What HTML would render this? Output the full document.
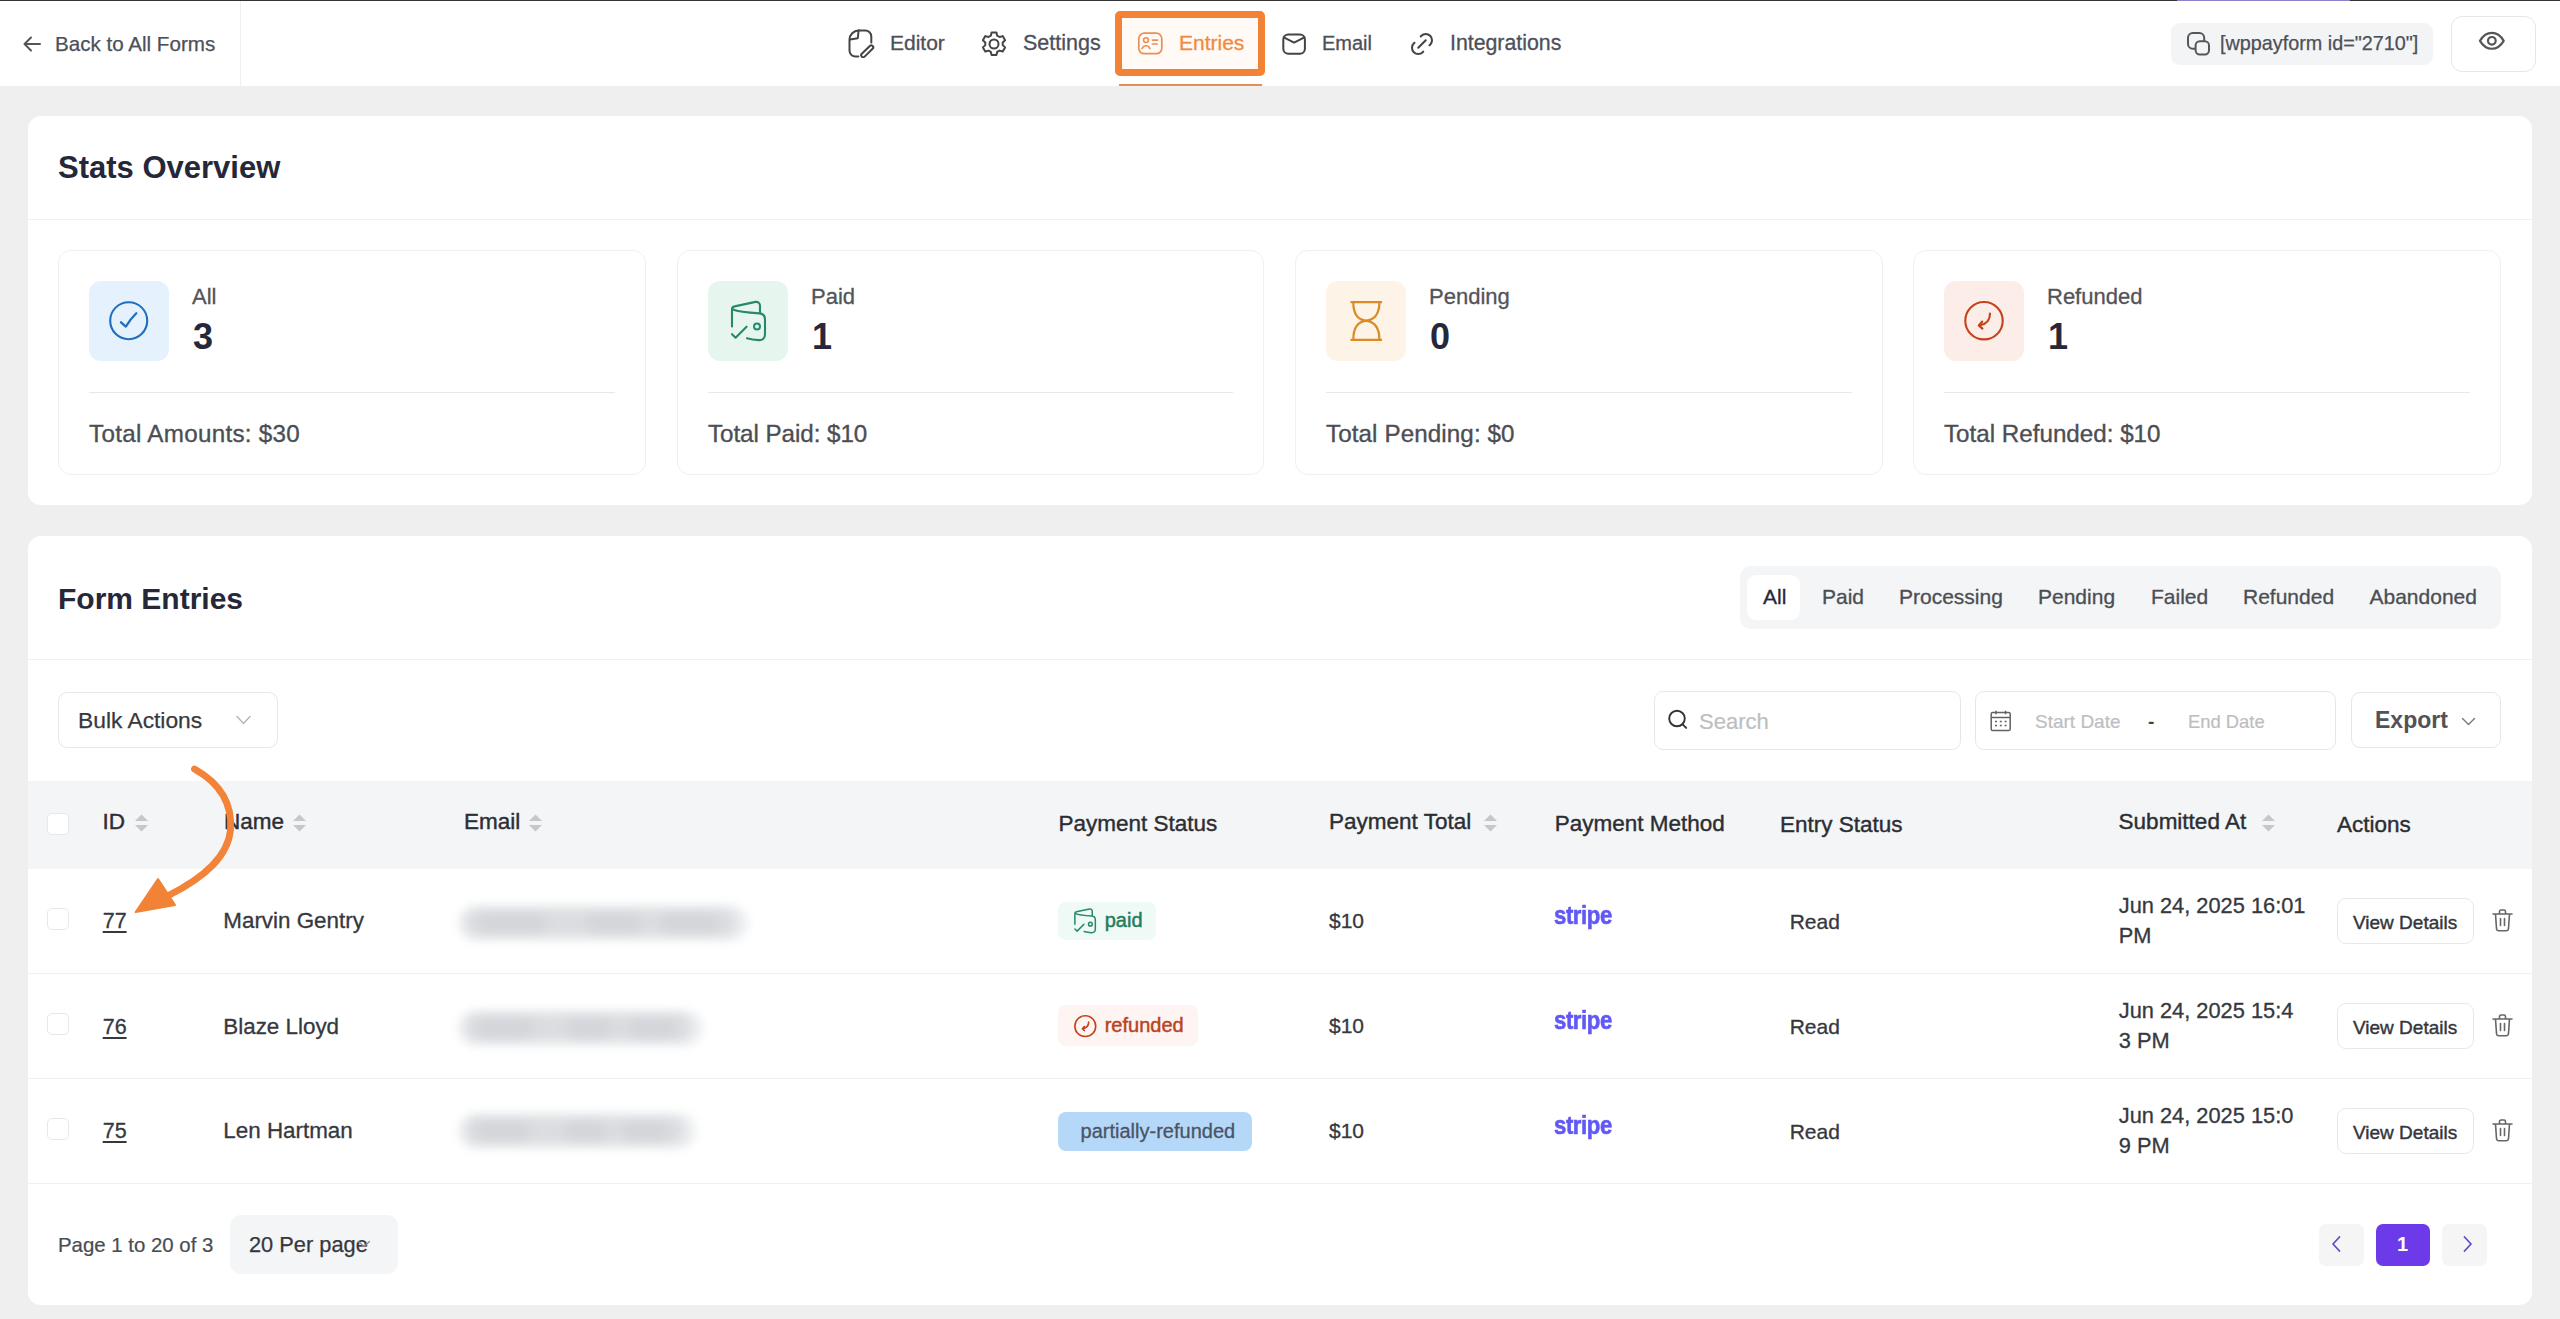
<!DOCTYPE html>
<html><head><meta charset="utf-8"><style>
html,body{margin:0;padding:0;}
body{width:2560px;height:1319px;position:relative;overflow:hidden;background:#efefef;font-family:"Liberation Sans",sans-serif;}
body>div,body>span,body>svg{position:absolute;}
.t{line-height:1;white-space:nowrap;}
</style></head><body>
<div style="left:0px;top:0px;width:2560px;height:86px;background:#fff"></div>
<div style="left:0px;top:0px;width:2560px;height:1px;background:#333"></div>
<div style="left:2177px;top:0px;width:173px;height:1px;background:#8b80c9"></div>
<div style="left:240px;top:1px;width:1px;height:85px;background:#efefef"></div>
<svg style="left:22px;top:34px;" width="20" height="20" viewBox="0 0 20 20" fill="none"><path d="M18 10H3M9 3.5L2.5 10 9 16.5" stroke="#555" stroke-width="2" stroke-linecap="round" stroke-linejoin="round"/></svg>
<span class="t" style="left:55.0px;top:34px;font-size:20.6px;color:#4d5058;font-weight:400;-webkit-text-stroke:0.25px #4d5058">Back to All Forms</span>
<svg style="left:846px;top:28px;" width="30" height="30" viewBox="0 0 30 30" fill="none"><path d="M12.6 2.5H19.3a6 6 0 0 1 6 6V14.5" stroke="#444" stroke-width="2" stroke-linecap="round"/><path d="M12.6 2.5C7.5 2.6 3.6 6.5 3.5 11.6V22.6a6 6 0 0 0 6 6H12.3" stroke="#444" stroke-width="2" stroke-linecap="round"/><path d="M12.6 2.5L11.8 10.2 4 11.4" stroke="#444" stroke-width="2" stroke-linecap="round" stroke-linejoin="round"/><path d="M17.2 27.2L25.2 19.4" stroke="#444" stroke-width="6" stroke-linecap="round"/><path d="M17.2 27.2L25.2 19.4" stroke="#fff" stroke-width="2" stroke-linecap="round"/></svg>
<span class="t" style="left:890.0px;top:32px;font-size:21px;color:#4d5058;font-weight:400;-webkit-text-stroke:0.3px #4d5058">Editor</span>
<svg style="left:979px;top:29px;" width="30" height="30" viewBox="0 0 30 30" fill="none"><circle cx="15" cy="15" r="4.5" stroke="#444" stroke-width="2"/><path d="M12.6 3.5h4.8l.8 3.2 2.3 1.3 3.2-.9 2.4 4.1-2.4 2.3v2.6l2.4 2.3-2.4 4.1-3.2-.9-2.3 1.3-.8 3.2h-4.8l-.8-3.2-2.3-1.3-3.2.9-2.4-4.1 2.4-2.3v-2.6L3.9 11.2l2.4-4.1 3.2.9 2.3-1.3z" stroke="#444" stroke-width="2" stroke-linejoin="round"/></svg>
<span class="t" style="left:1023.0px;top:33px;font-size:21.5px;color:#4d5058;font-weight:400;-webkit-text-stroke:0.3px #4d5058">Settings</span>
<div style="left:1115px;top:11px;width:150px;height:65px;border:7px solid #f28236;border-radius:5px;box-sizing:border-box;background:#fffaf6"></div>
<div style="left:1119px;top:84px;width:143px;height:2px;background:#e38e58"></div>
<svg style="left:1136px;top:31px;" width="28" height="26" viewBox="0 0 28 26" fill="none"><rect x="2.8" y="2.2" width="23" height="20.5" rx="5.5" stroke="#eb8f55" stroke-width="1.7"/><circle cx="10" cy="9.1" r="2.4" stroke="#eb8f55" stroke-width="1.6"/><path d="M6 17.6c1-1.9 2.4-2.9 4-2.9s3 1 4 2.9M16.3 9.1h5.4M16.3 13h4.9" stroke="#eb8f55" stroke-width="1.6" stroke-linecap="round"/></svg>
<span class="t" style="left:1179.0px;top:32px;font-size:21px;color:#f08a40;font-weight:400;-webkit-text-stroke:0.3px #f08a40">Entries</span>
<svg style="left:1280px;top:31px;" width="28" height="26" viewBox="0 0 28 26" fill="none"><rect x="3.3" y="3.4" width="21.6" height="19.4" rx="5" stroke="#444" stroke-width="2"/><path d="M3.8 6.3l10.3 5.3 10.3-5.3" stroke="#444" stroke-width="2" stroke-linecap="round" stroke-linejoin="round"/></svg>
<span class="t" style="left:1322.0px;top:33px;font-size:20px;color:#4d5058;font-weight:400;-webkit-text-stroke:0.3px #4d5058">Email</span>
<svg style="left:1407px;top:28.5px;" width="30" height="30" viewBox="0 0 24 24" fill="none"><path d="M9 15l6-6M11 6l.463-.536a5 5 0 0 1 7.071 7.072l-.534.464M13 18l-.397.534a5.068 5.068 0 0 1-7.127 0 4.972 4.972 0 0 1 0-7.071l.524-.463" stroke="#444" stroke-width="1.65" stroke-linecap="round" stroke-linejoin="round"/></svg>
<span class="t" style="left:1450.0px;top:33px;font-size:21.3px;color:#4d5058;font-weight:400;-webkit-text-stroke:0.3px #4d5058">Integrations</span>
<div style="left:2171px;top:23px;width:262px;height:42px;background:#f3f4f6;border-radius:9px"></div>
<svg style="left:2185px;top:30px;" width="28" height="28" viewBox="0 0 28 28" fill="none"><rect x="3" y="3" width="16.2" height="15.8" rx="4.8" stroke="#55575c" stroke-width="2"/><rect x="10.6" y="11.2" width="13.4" height="13.2" rx="4.2" fill="#f3f4f6" stroke="#55575c" stroke-width="2"/></svg>
<span class="t" style="left:2220.0px;top:34px;font-size:19.8px;color:#4d5056;font-weight:400;-webkit-text-stroke:0.25px #4d5056">[wppayform id="2710"]</span>
<div style="left:2451px;top:16px;width:85px;height:56px;border:1px solid #e6e7e9;border-radius:11px;box-sizing:border-box;background:#fff"></div>
<svg style="left:2476.3px;top:25.4px;" width="31.7" height="31.7" viewBox="0 0 24 24" fill="none"><circle cx="12" cy="12" r="2.9" stroke="#555" stroke-width="1.65"/><path d="M21 12c-2.4 4-5.4 6-9 6-3.6 0-6.6-2-9-6 2.4-4 5.4-6 9-6 3.6 0 6.6 2 9 6" stroke="#555" stroke-width="1.65" stroke-linecap="round" stroke-linejoin="round"/></svg>
<div style="left:28px;top:116px;width:2504px;height:389px;background:#fff;border-radius:13px"></div>
<span class="t" style="left:58.0px;top:152px;font-size:31px;color:#262839;font-weight:700;">Stats Overview</span>
<div style="left:28px;top:219px;width:2504px;height:1px;background:#f1f1f3"></div>
<div style="left:58px;top:250px;width:588px;height:225px;border:1px solid #f0f0f2;border-radius:13px;box-sizing:border-box"></div>
<div style="left:89px;top:281px;width:80px;height:80px;background:#e5f2fd;border-radius:12px"></div>
<svg style="left:89px;top:281px;" width="80" height="80" viewBox="0 0 80 80" fill="none"><circle cx="39.7" cy="39.7" r="18.5" stroke="#1f6fbf" stroke-width="2.1"/><path d="M32 41.3l4.8 4.3c3-5 6.5-9.5 10.5-13.4" stroke="#1f6fbf" stroke-width="2.3" stroke-linecap="round" stroke-linejoin="round"/></svg>
<span class="t" style="left:192.0px;top:286px;font-size:22px;color:#525459;font-weight:400;-webkit-text-stroke:0.3px #525459">All</span>
<span class="t" style="left:193.0px;top:319px;font-size:36px;color:#262839;font-weight:700;">3</span>
<div style="left:89px;top:392px;width:526px;height:1px;background:#e6e8eb"></div>
<span class="t" style="left:89.0px;top:422px;font-size:24.2px;color:#4c4e53;font-weight:400;-webkit-text-stroke:0.35px #4c4e53;letter-spacing:0.3px">Total Amounts: $30</span>
<div style="left:677px;top:250px;width:587px;height:225px;border:1px solid #f0f0f2;border-radius:13px;box-sizing:border-box"></div>
<div style="left:708px;top:281px;width:80px;height:80px;background:#e6f6ef;border-radius:12px"></div>
<svg style="left:708px;top:281px;" width="80" height="80" viewBox="0 0 80 80" fill="none"><path d="M24 45.5V28.5c0-1.6 1-2.8 2.6-3.1L47.5 20.9c2.6-.4 4.5 1.3 4.5 3.9V31.5" stroke="#25896a" stroke-width="2.1" stroke-linecap="round"/><path d="M25 28.5C30 30.6 40 31.6 51.5 32.4c3.3.3 5.5 2.6 5.5 6.1V53.5c0 3.4-2.4 5.8-6 5.6-4-.2-8.5-.8-12-1.8" stroke="#25896a" stroke-width="2.1" stroke-linecap="round"/><circle cx="49" cy="45.5" r="3" stroke="#25896a" stroke-width="2"/><path d="M24 53.2l3.6 3.5 11-11" stroke="#25896a" stroke-width="2.1" stroke-linecap="round" stroke-linejoin="round"/></svg>
<span class="t" style="left:811.0px;top:286px;font-size:22px;color:#525459;font-weight:400;-webkit-text-stroke:0.3px #525459">Paid</span>
<span class="t" style="left:812.0px;top:319px;font-size:36px;color:#262839;font-weight:700;">1</span>
<div style="left:708px;top:392px;width:525px;height:1px;background:#e6e8eb"></div>
<span class="t" style="left:708.0px;top:422px;font-size:24.2px;color:#4c4e53;font-weight:400;-webkit-text-stroke:0.35px #4c4e53;letter-spacing:-0.05px">Total Paid: $10</span>
<div style="left:1295px;top:250px;width:588px;height:225px;border:1px solid #f0f0f2;border-radius:13px;box-sizing:border-box"></div>
<div style="left:1326px;top:281px;width:80px;height:80px;background:#fef3e7;border-radius:12px"></div>
<svg style="left:1326px;top:281px;" width="80" height="80" viewBox="0 0 80 80" fill="none"><path d="M24.5 21.2H56M24.5 58.8H56" stroke="#dc8a24" stroke-width="2.3"/><path d="M27.3 21.2c0 10 3 17.5 12.7 18.5 9.7-1 13.4-8.5 13.4-18.5M27.3 58.8c0-10 3-17.8 12.7-19.1 9.7 1.3 13.4 9.1 13.4 19.1" stroke="#dc8a24" stroke-width="2.2"/></svg>
<span class="t" style="left:1429.0px;top:286px;font-size:22px;color:#525459;font-weight:400;-webkit-text-stroke:0.3px #525459">Pending</span>
<span class="t" style="left:1430.0px;top:319px;font-size:36px;color:#262839;font-weight:700;">0</span>
<div style="left:1326px;top:392px;width:526px;height:1px;background:#e6e8eb"></div>
<span class="t" style="left:1326.0px;top:422px;font-size:24.2px;color:#4c4e53;font-weight:400;-webkit-text-stroke:0.35px #4c4e53;letter-spacing:0.1px">Total Pending: $0</span>
<div style="left:1913px;top:250px;width:588px;height:225px;border:1px solid #f0f0f2;border-radius:13px;box-sizing:border-box"></div>
<div style="left:1944px;top:281px;width:80px;height:80px;background:#fdede8;border-radius:12px"></div>
<svg style="left:1944px;top:281px;" width="80" height="80" viewBox="0 0 80 80" fill="none"><circle cx="40" cy="39.7" r="18.7" stroke="#c4421e" stroke-width="2.1"/><path d="M46 32.5c0 6-3.5 10.5-10 11.8" stroke="#c4421e" stroke-width="2.1" stroke-linecap="round"/><path d="M38.2 40.6l-3.4 3.8 3.6 3.2" stroke="#c4421e" stroke-width="2.2" stroke-linecap="round" stroke-linejoin="round"/></svg>
<span class="t" style="left:2047.0px;top:286px;font-size:22px;color:#525459;font-weight:400;-webkit-text-stroke:0.3px #525459">Refunded</span>
<span class="t" style="left:2048.0px;top:319px;font-size:36px;color:#262839;font-weight:700;">1</span>
<div style="left:1944px;top:392px;width:526px;height:1px;background:#e6e8eb"></div>
<span class="t" style="left:1944.0px;top:422px;font-size:24.2px;color:#4c4e53;font-weight:400;-webkit-text-stroke:0.35px #4c4e53;letter-spacing:0.0px">Total Refunded: $10</span>
<div style="left:28px;top:536px;width:2504px;height:769px;background:#fff;border-radius:13px"></div>
<span class="t" style="left:58.0px;top:584px;font-size:30px;color:#262839;font-weight:700;">Form Entries</span>
<div style="left:1740px;top:566px;width:761px;height:63px;background:#f3f5f7;border-radius:11px"></div>
<div style="left:1747px;top:575px;width:53px;height:45px;background:#fff;border-radius:9px"></div>
<span class="t" style="left:1763.0px;top:586px;font-size:21px;color:#262839;font-weight:400;-webkit-text-stroke:0.3px #262839">All</span>
<span class="t" style="left:1822.0px;top:586px;font-size:21px;color:#4c4e53;font-weight:400;-webkit-text-stroke:0.3px #4c4e53">Paid</span>
<span class="t" style="left:1899.0px;top:586px;font-size:21px;color:#4c4e53;font-weight:400;-webkit-text-stroke:0.3px #4c4e53">Processing</span>
<span class="t" style="left:2038.0px;top:586px;font-size:21px;color:#4c4e53;font-weight:400;-webkit-text-stroke:0.3px #4c4e53">Pending</span>
<span class="t" style="left:2151.0px;top:586px;font-size:21px;color:#4c4e53;font-weight:400;-webkit-text-stroke:0.3px #4c4e53">Failed</span>
<span class="t" style="left:2243.0px;top:586px;font-size:21px;color:#4c4e53;font-weight:400;-webkit-text-stroke:0.3px #4c4e53">Refunded</span>
<span class="t" style="left:2369.5px;top:586px;font-size:21px;color:#4c4e53;font-weight:400;-webkit-text-stroke:0.3px #4c4e53">Abandoned</span>
<div style="left:28px;top:659px;width:2504px;height:1px;background:#f0f1f3"></div>
<div style="left:58px;top:692px;width:220px;height:56px;border:1px solid #e6e7e9;border-radius:9px;box-sizing:border-box"></div>
<span class="t" style="left:78.0px;top:709px;font-size:22.8px;color:#38393d;font-weight:400;-webkit-text-stroke:0.25px #38393d">Bulk Actions</span>
<svg style="left:235px;top:714px;" width="17" height="12" viewBox="0 0 17 12" fill="none"><path d="M2 2.5l6.5 7 6.5-7" stroke="#b3b5b8" stroke-width="1.4" stroke-linecap="round" stroke-linejoin="round"/></svg>
<div style="left:1654px;top:691px;width:307px;height:59px;border:1px solid #e6e7e9;border-radius:9px;box-sizing:border-box"></div>
<svg style="left:1665px;top:706px;" width="26" height="26" viewBox="0 0 26 26" fill="none"><circle cx="12" cy="12.5" r="7.8" stroke="#333" stroke-width="1.9"/><path d="M17.6 18.3l3.6 3.6" stroke="#333" stroke-width="1.9" stroke-linecap="round"/></svg>
<span class="t" style="left:1699.0px;top:711px;font-size:22px;color:#bcbec2;font-weight:400;-webkit-text-stroke:0.2px #bcbec2">Search</span>
<div style="left:1975px;top:691px;width:361px;height:59px;border:1px solid #e6e7e9;border-radius:9px;box-sizing:border-box"></div>
<svg style="left:1989px;top:709px;" width="24" height="23" viewBox="0 0 24 23" fill="none"><rect x="2.2" y="3.5" width="19" height="18" rx="1.6" stroke="#606266" stroke-width="1.5"/><path d="M2.2 8.5h19M7 1.8v3.4M16.5 1.8v3.4" stroke="#606266" stroke-width="1.5"/><path d="M6 12.5h2M10.8 12.5h2M15.6 12.5h2M6 16.5h2M10.8 16.5h2M15.6 16.5h2" stroke="#606266" stroke-width="1.5"/></svg>
<span class="t" style="left:2035.0px;top:712px;font-size:19px;color:#bcbec2;font-weight:400;-webkit-text-stroke:0.2px #bcbec2">Start Date</span>
<span class="t" style="left:2148.0px;top:712px;font-size:19px;color:#444;font-weight:700;">-</span>
<span class="t" style="left:2188.0px;top:713px;font-size:18.4px;color:#bcbec2;font-weight:400;-webkit-text-stroke:0.2px #bcbec2">End Date</span>
<div style="left:2351px;top:692px;width:150px;height:56px;border:1px solid #e6e7e9;border-radius:9px;box-sizing:border-box"></div>
<span class="t" style="left:2375.0px;top:709px;font-size:23px;color:#505358;font-weight:700;">Export</span>
<svg style="left:2460px;top:715px;" width="18" height="13" viewBox="0 0 18 13" fill="none"><path d="M2.5 3.5l6 6 6-6" stroke="#777" stroke-width="1.4" stroke-linecap="round" stroke-linejoin="round"/></svg>
<div style="left:28px;top:781px;width:2504px;height:88px;background:#f3f5f7"></div>
<div style="left:47px;top:813px;width:22px;height:22px;background:#fff;border:1px solid #e6e8eb;border-radius:5px;box-sizing:border-box"></div>
<span class="t" style="left:102.5px;top:811px;font-size:22.5px;color:#2c2e33;font-weight:400;-webkit-text-stroke:0.4px #2c2e33">ID</span>
<svg style="left:134px;top:814px;" width="15" height="18" viewBox="0 0 15 18" fill="none"><path d="M7.5 0.5L14 7H1z" fill="#c4c7cc"/><path d="M7.5 17.5L14 11H1z" fill="#c4c7cc"/></svg>
<span class="t" style="left:224.0px;top:811px;font-size:22.5px;color:#2c2e33;font-weight:400;-webkit-text-stroke:0.4px #2c2e33">Name</span>
<svg style="left:292px;top:814px;" width="15" height="18" viewBox="0 0 15 18" fill="none"><path d="M7.5 0.5L14 7H1z" fill="#c4c7cc"/><path d="M7.5 17.5L14 11H1z" fill="#c4c7cc"/></svg>
<span class="t" style="left:464.0px;top:811px;font-size:22.5px;color:#2c2e33;font-weight:400;-webkit-text-stroke:0.4px #2c2e33">Email</span>
<svg style="left:528px;top:814px;" width="15" height="18" viewBox="0 0 15 18" fill="none"><path d="M7.5 0.5L14 7H1z" fill="#c4c7cc"/><path d="M7.5 17.5L14 11H1z" fill="#c4c7cc"/></svg>
<span class="t" style="left:1058.4px;top:813px;font-size:22.5px;color:#2c2e33;font-weight:400;-webkit-text-stroke:0.4px #2c2e33">Payment Status</span>
<span class="t" style="left:1329.0px;top:811px;font-size:22.5px;color:#2c2e33;font-weight:400;-webkit-text-stroke:0.4px #2c2e33">Payment Total</span>
<svg style="left:1483px;top:814px;" width="15" height="18" viewBox="0 0 15 18" fill="none"><path d="M7.5 0.5L14 7H1z" fill="#c4c7cc"/><path d="M7.5 17.5L14 11H1z" fill="#c4c7cc"/></svg>
<span class="t" style="left:1554.7px;top:813px;font-size:22.5px;color:#2c2e33;font-weight:400;-webkit-text-stroke:0.4px #2c2e33">Payment Method</span>
<span class="t" style="left:1780.0px;top:814px;font-size:22.5px;color:#2c2e33;font-weight:400;-webkit-text-stroke:0.4px #2c2e33">Entry Status</span>
<span class="t" style="left:2118.6px;top:811px;font-size:22.5px;color:#2c2e33;font-weight:400;-webkit-text-stroke:0.4px #2c2e33">Submitted At</span>
<svg style="left:2261px;top:814px;" width="15" height="18" viewBox="0 0 15 18" fill="none"><path d="M7.5 0.5L14 7H1z" fill="#c4c7cc"/><path d="M7.5 17.5L14 11H1z" fill="#c4c7cc"/></svg>
<span class="t" style="left:2337.0px;top:814px;font-size:22.5px;color:#2c2e33;font-weight:400;-webkit-text-stroke:0.4px #2c2e33">Actions</span>
<div style="left:28px;top:973px;width:2504px;height:1px;background:#eef0f2"></div>
<div style="left:47px;top:908px;width:22px;height:22px;background:#fff;border:1px solid #e6e8eb;border-radius:5px;box-sizing:border-box"></div>
<span class="t" style="left:102.7px;top:911px;font-size:21.5px;color:#36383e;font-weight:400;text-decoration:underline;text-underline-offset:3px;-webkit-text-stroke:0.3px #36383e">77</span>
<span class="t" style="left:223.3px;top:910px;font-size:22.4px;color:#36383e;font-weight:400;-webkit-text-stroke:0.3px #36383e">Marvin Gentry</span>
<div style="left:458px;top:905px;width:290px;height:36px;background:#eceef0;border-radius:18px;filter:blur(5px)"></div>
<div style="left:466px;top:910px;width:270px;height:25px;background:#dbdde0;border-radius:12px;filter:blur(5px)"></div>
<div style="left:479px;top:915px;width:67px;height:16px;background:#d3d5d9;border-radius:8px;filter:blur(5px)"></div>
<div style="left:587px;top:915px;width:54px;height:16px;background:#d3d5d9;border-radius:8px;filter:blur(5px)"></div>
<div style="left:660px;top:915px;width:59px;height:16px;background:#d3d5d9;border-radius:8px;filter:blur(5px)"></div>
<div style="left:1058px;top:902px;width:98px;height:38px;background:#eff9f5;border-radius:8px"></div>
<svg style="left:1059.8px;top:896.1px;" width="49.6" height="49.6" viewBox="0 0 80 80" fill="none"><path d="M24 45.5V28.5c0-1.6 1-2.8 2.6-3.1L47.5 20.9c2.6-.4 4.5 1.3 4.5 3.9V31.5" stroke="#25896a" stroke-width="2.4" stroke-linecap="round"/><path d="M25 28.5C30 30.6 40 31.6 51.5 32.4c3.3.3 5.5 2.6 5.5 6.1V53.5c0 3.4-2.4 5.8-6 5.6-4-.2-8.5-.8-12-1.8" stroke="#25896a" stroke-width="2.4" stroke-linecap="round"/><circle cx="49" cy="45.5" r="3" stroke="#25896a" stroke-width="2.4"/><path d="M24 53.2l3.6 3.5 11-11" stroke="#25896a" stroke-width="2.4" stroke-linecap="round" stroke-linejoin="round"/></svg>
<span class="t" style="left:1104.7px;top:910px;font-size:20px;color:#1f7d5b;font-weight:400;-webkit-text-stroke:0.45px #1f7d5b">paid</span>
<span class="t" style="left:1329.0px;top:910px;font-size:21px;color:#36383e;font-weight:400;-webkit-text-stroke:0.3px #36383e">$10</span>
<span class="t" style="left:1554.0px;top:903px;font-size:25.5px;color:#6158f5;font-weight:700;letter-spacing:-0.5px;-webkit-text-stroke:0.6px #6158f5;transform:scaleX(0.87);transform-origin:0 0">stripe</span>
<span class="t" style="left:1789.7px;top:911px;font-size:21px;color:#36383e;font-weight:400;-webkit-text-stroke:0.3px #36383e">Read</span>
<span class="t" style="left:2118.8px;top:895px;font-size:21.8px;color:#36383e;font-weight:400;-webkit-text-stroke:0.3px #36383e">Jun 24, 2025 16:01</span>
<span class="t" style="left:2118.8px;top:925px;font-size:21.8px;color:#36383e;font-weight:400;-webkit-text-stroke:0.3px #36383e">PM</span>
<div style="left:2337px;top:898px;width:137px;height:46px;border:1px solid #e6e8eb;border-radius:9px;box-sizing:border-box"></div>
<span class="t" style="left:2353.0px;top:913px;font-size:19px;color:#34363b;font-weight:400;-webkit-text-stroke:0.4px #34363b">View Details</span>
<svg style="left:2491px;top:908px;" width="23" height="25" viewBox="0 0 23 25" fill="none"><path d="M2 6h19M8.5 6V3.5c0-.8.6-1.5 1.5-1.5h3c.9 0 1.5.7 1.5 1.5V6M4.5 6l1 14.5c.1 1.3 1.1 2.3 2.4 2.3h7.2c1.3 0 2.3-1 2.4-2.3L18.5 6M9.5 10.5v7M13.5 10.5v7" stroke="#666" stroke-width="1.6" stroke-linecap="round"/></svg>
<div style="left:28px;top:1078px;width:2504px;height:1px;background:#eef0f2"></div>
<div style="left:47px;top:1013px;width:22px;height:22px;background:#fff;border:1px solid #e6e8eb;border-radius:5px;box-sizing:border-box"></div>
<span class="t" style="left:102.7px;top:1017px;font-size:21.5px;color:#36383e;font-weight:400;text-decoration:underline;text-underline-offset:3px;-webkit-text-stroke:0.3px #36383e">76</span>
<span class="t" style="left:223.3px;top:1016px;font-size:22.4px;color:#36383e;font-weight:400;-webkit-text-stroke:0.3px #36383e">Blaze Lloyd</span>
<div style="left:458px;top:1010px;width:245px;height:36px;background:#eceef0;border-radius:18px;filter:blur(5px)"></div>
<div style="left:466px;top:1015px;width:225px;height:25px;background:#dbdde0;border-radius:12px;filter:blur(5px)"></div>
<div style="left:477px;top:1020px;width:56px;height:16px;background:#d3d5d9;border-radius:8px;filter:blur(5px)"></div>
<div style="left:567px;top:1020px;width:45px;height:16px;background:#d3d5d9;border-radius:8px;filter:blur(5px)"></div>
<div style="left:628px;top:1020px;width:49px;height:16px;background:#d3d5d9;border-radius:8px;filter:blur(5px)"></div>
<div style="left:1058px;top:1005px;width:139.5px;height:40.59999999999991px;background:#fef5f2;border-radius:8px"></div>
<svg style="left:1062.7px;top:1003.8px;" width="44.6" height="44.6" viewBox="0 0 80 80" fill="none"><circle cx="40" cy="39.7" r="18.7" stroke="#c4421e" stroke-width="2.9"/><path d="M46 32.5c0 6-3.5 10.5-10 11.8" stroke="#c4421e" stroke-width="2.9" stroke-linecap="round"/><path d="M38.2 40.6l-3.4 3.8 3.6 3.2" stroke="#c4421e" stroke-width="2.9" stroke-linecap="round" stroke-linejoin="round"/></svg>
<span class="t" style="left:1104.7px;top:1015px;font-size:20px;color:#bb431d;font-weight:400;-webkit-text-stroke:0.45px #bb431d">refunded</span>
<span class="t" style="left:1329.0px;top:1015px;font-size:21px;color:#36383e;font-weight:400;-webkit-text-stroke:0.3px #36383e">$10</span>
<span class="t" style="left:1554.0px;top:1008px;font-size:25.5px;color:#6158f5;font-weight:700;letter-spacing:-0.5px;-webkit-text-stroke:0.6px #6158f5;transform:scaleX(0.87);transform-origin:0 0">stripe</span>
<span class="t" style="left:1789.7px;top:1016px;font-size:21px;color:#36383e;font-weight:400;-webkit-text-stroke:0.3px #36383e">Read</span>
<span class="t" style="left:2118.8px;top:1000px;font-size:21.8px;color:#36383e;font-weight:400;-webkit-text-stroke:0.3px #36383e">Jun 24, 2025 15:4</span>
<span class="t" style="left:2118.8px;top:1030px;font-size:21.8px;color:#36383e;font-weight:400;-webkit-text-stroke:0.3px #36383e">3 PM</span>
<div style="left:2337px;top:1003px;width:137px;height:46px;border:1px solid #e6e8eb;border-radius:9px;box-sizing:border-box"></div>
<span class="t" style="left:2353.0px;top:1018px;font-size:19px;color:#34363b;font-weight:400;-webkit-text-stroke:0.4px #34363b">View Details</span>
<svg style="left:2491px;top:1013px;" width="23" height="25" viewBox="0 0 23 25" fill="none"><path d="M2 6h19M8.5 6V3.5c0-.8.6-1.5 1.5-1.5h3c.9 0 1.5.7 1.5 1.5V6M4.5 6l1 14.5c.1 1.3 1.1 2.3 2.4 2.3h7.2c1.3 0 2.3-1 2.4-2.3L18.5 6M9.5 10.5v7M13.5 10.5v7" stroke="#666" stroke-width="1.6" stroke-linecap="round"/></svg>
<div style="left:28px;top:1183px;width:2504px;height:1px;background:#eef0f2"></div>
<div style="left:47px;top:1118px;width:22px;height:22px;background:#fff;border:1px solid #e6e8eb;border-radius:5px;box-sizing:border-box"></div>
<span class="t" style="left:102.7px;top:1121px;font-size:21.5px;color:#36383e;font-weight:400;text-decoration:underline;text-underline-offset:3px;-webkit-text-stroke:0.3px #36383e">75</span>
<span class="t" style="left:223.3px;top:1120px;font-size:22.4px;color:#36383e;font-weight:400;-webkit-text-stroke:0.3px #36383e">Len Hartman</span>
<div style="left:458px;top:1113px;width:238px;height:36px;background:#eceef0;border-radius:18px;filter:blur(5px)"></div>
<div style="left:466px;top:1118px;width:218px;height:25px;background:#dbdde0;border-radius:12px;filter:blur(5px)"></div>
<div style="left:476px;top:1123px;width:54px;height:16px;background:#d3d5d9;border-radius:8px;filter:blur(5px)"></div>
<div style="left:564px;top:1123px;width:43px;height:16px;background:#d3d5d9;border-radius:8px;filter:blur(5px)"></div>
<div style="left:622px;top:1123px;width:47px;height:16px;background:#d3d5d9;border-radius:8px;filter:blur(5px)"></div>
<div style="left:1058px;top:1112px;width:194px;height:39px;background:#b6d8f8;border-radius:8px"></div>
<span class="t" style="left:1080.6px;top:1121px;font-size:20px;color:#4a5466;font-weight:400;-webkit-text-stroke:0.3px #4a5466">partially-refunded</span>
<span class="t" style="left:1329.0px;top:1120px;font-size:21px;color:#36383e;font-weight:400;-webkit-text-stroke:0.3px #36383e">$10</span>
<span class="t" style="left:1554.0px;top:1113px;font-size:25.5px;color:#6158f5;font-weight:700;letter-spacing:-0.5px;-webkit-text-stroke:0.6px #6158f5;transform:scaleX(0.87);transform-origin:0 0">stripe</span>
<span class="t" style="left:1789.7px;top:1121px;font-size:21px;color:#36383e;font-weight:400;-webkit-text-stroke:0.3px #36383e">Read</span>
<span class="t" style="left:2118.8px;top:1105px;font-size:21.8px;color:#36383e;font-weight:400;-webkit-text-stroke:0.3px #36383e">Jun 24, 2025 15:0</span>
<span class="t" style="left:2118.8px;top:1135px;font-size:21.8px;color:#36383e;font-weight:400;-webkit-text-stroke:0.3px #36383e">9 PM</span>
<div style="left:2337px;top:1108px;width:137px;height:46px;border:1px solid #e6e8eb;border-radius:9px;box-sizing:border-box"></div>
<span class="t" style="left:2353.0px;top:1123px;font-size:19px;color:#34363b;font-weight:400;-webkit-text-stroke:0.4px #34363b">View Details</span>
<svg style="left:2491px;top:1118px;" width="23" height="25" viewBox="0 0 23 25" fill="none"><path d="M2 6h19M8.5 6V3.5c0-.8.6-1.5 1.5-1.5h3c.9 0 1.5.7 1.5 1.5V6M4.5 6l1 14.5c.1 1.3 1.1 2.3 2.4 2.3h7.2c1.3 0 2.3-1 2.4-2.3L18.5 6M9.5 10.5v7M13.5 10.5v7" stroke="#666" stroke-width="1.6" stroke-linecap="round"/></svg>
<span class="t" style="left:58.0px;top:1235px;font-size:20.4px;color:#4a4c52;font-weight:400;-webkit-text-stroke:0.2px #4a4c52">Page 1 to 20 of 3</span>
<div style="left:230px;top:1215px;width:168px;height:59px;background:#f3f5f7;border-radius:11px"></div>
<span class="t" style="left:249.0px;top:1234px;font-size:21.8px;color:#36383e;font-weight:400;-webkit-text-stroke:0.25px #36383e">20 Per page</span>
<svg style="left:356px;top:1238px;" width="16" height="12" viewBox="0 0 16 12" fill="none"><path d="M2.5 3.5l5.5 5 5.5-5" stroke="#8a8c90" stroke-width="1.3" stroke-linecap="round" stroke-linejoin="round"/></svg>
<div style="left:2319px;top:1224px;width:45px;height:42px;background:#f5f5f6;border-radius:7px"></div>
<svg style="left:2330px;top:1235px;" width="12" height="18" viewBox="0 0 12 18" fill="none"><path d="M9.5 2L3 9l6.5 7" stroke="#5b4fc9" stroke-width="1.8" stroke-linecap="round" stroke-linejoin="round"/></svg>
<div style="left:2376px;top:1224px;width:54px;height:42px;background:#6c3ae8;border-radius:7px"></div>
<span class="t" style="left:2397.0px;top:1234px;font-size:20px;color:#fff;font-weight:700;">1</span>
<div style="left:2442px;top:1224px;width:45px;height:42px;background:#f5f5f6;border-radius:7px"></div>
<svg style="left:2462px;top:1235px;" width="12" height="18" viewBox="0 0 12 18" fill="none"><path d="M2.5 2L9 9l-6.5 7" stroke="#5b4fc9" stroke-width="1.8" stroke-linecap="round" stroke-linejoin="round"/></svg>
<svg style="left:120px;top:750px;" width="140" height="180" viewBox="0 0 140 180" fill="none"><path d="M74.5 19C101 34 112.5 55 110.5 80c-2.5 25-23 46-63 66" stroke="#f28338" stroke-width="6.8" stroke-linecap="round" fill="none"/><path d="M38 129L55 155 15.7 162z" fill="#f28236" stroke="#f28236" stroke-width="2" stroke-linejoin="round"/></svg>
</body></html>
